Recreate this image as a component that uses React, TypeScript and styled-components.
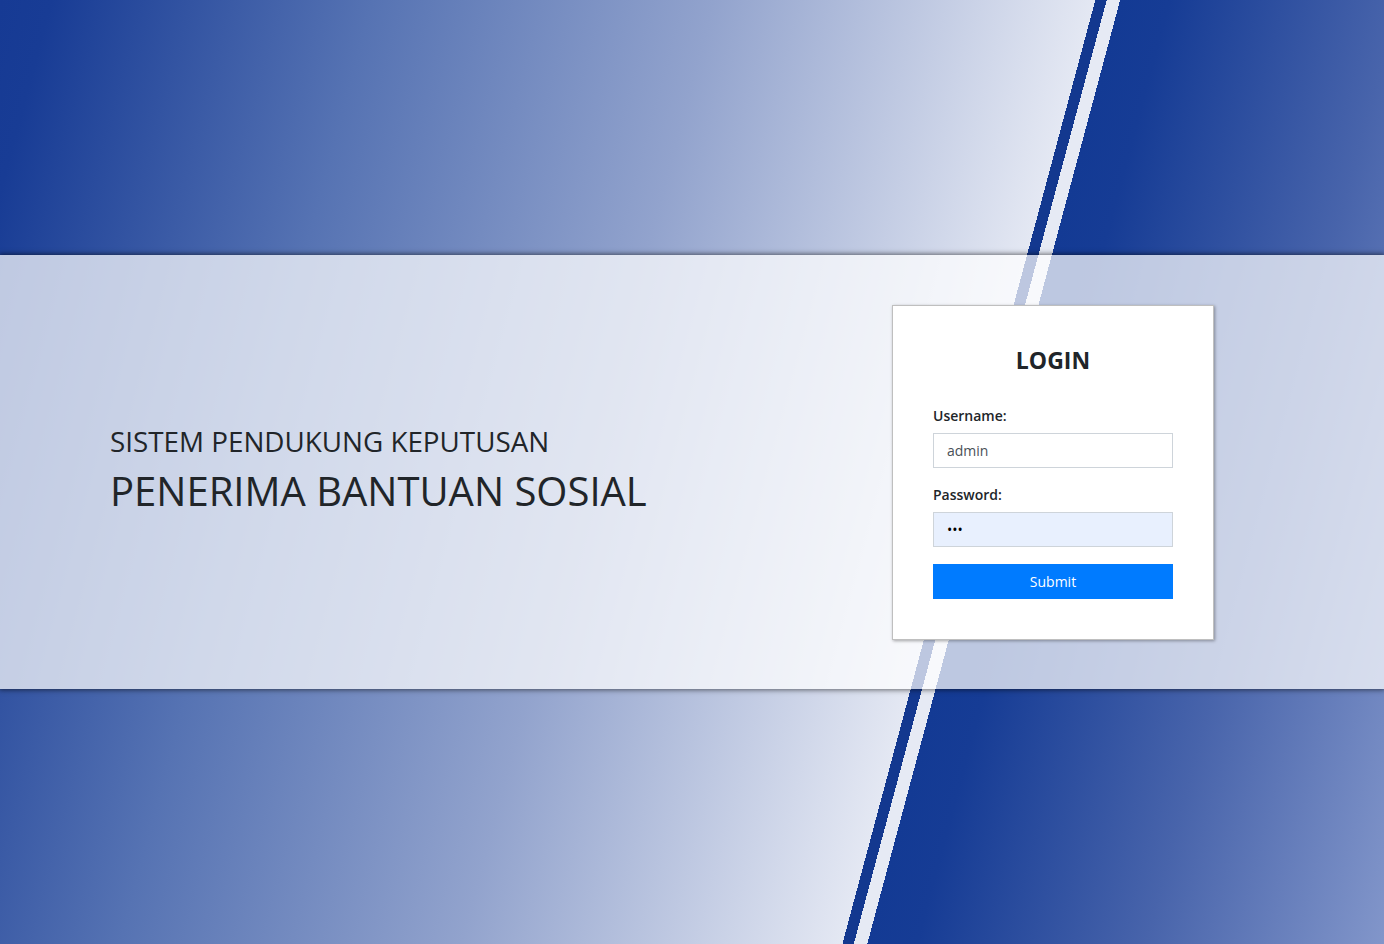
import styled, { createGlobalStyle } from 'styled-components';

const GlobalStyle = createGlobalStyle`
    html, body {
        margin: 0;
        padding: 0;
    }
    body {
        font-family: "Open Sans", "Noto Sans", "Liberation Sans", sans-serif;
        color: #212529;
    }
    * {
        box-sizing: border-box;
    }
`;

const Page = styled.div`
    min-height: 100vh;
    display: flex;
    flex-direction: column;
    justify-content: center;
    background: linear-gradient(
        105deg,
        #163a94 0px,
        #183c95 50px,
        #5673b3 360px,
        #92a3cd 690px,
        #e4e8f3 1058px,
        #13388f 1058px,
        #13388f 1069px,
        #e6eaf4 1069px,
        #e6eaf4 1082px,
        #133a94 1082px,
        #163c95 1130px,
        #4864ab 1351px,
        #8296ca 1581px
    );
`;

const Band = styled.section`
    height: 434px;
    display: flex;
    align-items: center;
    justify-content: space-between;
    padding: 0 170px 0 110px;
    background: rgba(255, 255, 255, 0.72);
    box-shadow: 0 0 5px 1px rgba(0, 0, 0, 0.55);
`;

const Headline = styled.div`
    display: flex;
    flex-direction: column;
    gap: 9px;
    margin-bottom: 4px;
`;

const Subtitle = styled.h3`
    margin: 0;
    font-size: 27.8px;
    font-weight: 500;
    line-height: 1.2;
    color: #212529;
`;

const Title = styled.h1`
    margin: 0;
    font-size: 40px;
    font-weight: 500;
    line-height: 1.2;
    color: #212529;
`;

const Card = styled.form`
    width: 322px;
    padding: 40px;
    background: #fff;
    border: 1px solid rgba(0, 0, 0, 0.25);
    box-shadow: 1px 1px 3px rgba(0, 0, 0, 0.35);
    display: flex;
    flex-direction: column;
`;

const CardTitle = styled.h4`
    margin: 0 0 30px;
    text-align: center;
    font-size: 23px;
    font-weight: 700;
    line-height: 29px;
`;

const Field = styled.div`
    display: flex;
    flex-direction: column;
    gap: 7px;
    margin-bottom: 16px;
`;

const Label = styled.label`
    font-size: 14px;
    font-weight: 600;
    line-height: 21px;
`;

const Input = styled.input<{ $filled?: boolean }>`
    height: 35px;
    width: 100%;
    padding: 0 13px;
    border: 1px solid #ced4da;
    background: ${p => (p.$filled ? '#e8f0fe' : '#fff')};
    color: ${p => (p.$filled ? '#000' : '#495057')};
    font-family: inherit;
    font-size: 14px;
    outline: none;
`;

const SubmitButton = styled.button`
    height: 35px;
    margin-top: 1px;
    border: none;
    background: #007bff;
    color: #fff;
    font-family: inherit;
    font-size: 14px;
    cursor: pointer;
`;

const App = () => {
    return (
        <>
            <GlobalStyle />
            <Page>
                <Band>
                    <Headline>
                        <Subtitle>SISTEM PENDUKUNG KEPUTUSAN</Subtitle>
                        <Title>PENERIMA BANTUAN SOSIAL</Title>
                    </Headline>
                    <Card onSubmit={e => e.preventDefault()}>
                        <CardTitle>LOGIN</CardTitle>
                        <Field>
                            <Label htmlFor="username">Username:</Label>
                            <Input id="username" defaultValue="admin" />
                        </Field>
                        <Field>
                            <Label htmlFor="password">Password:</Label>
                            <Input id="password" type="password" defaultValue="abc" $filled />
                        </Field>
                        <SubmitButton type="submit">Submit</SubmitButton>
                    </Card>
                </Band>
            </Page>
        </>
    );
};

export default App;
